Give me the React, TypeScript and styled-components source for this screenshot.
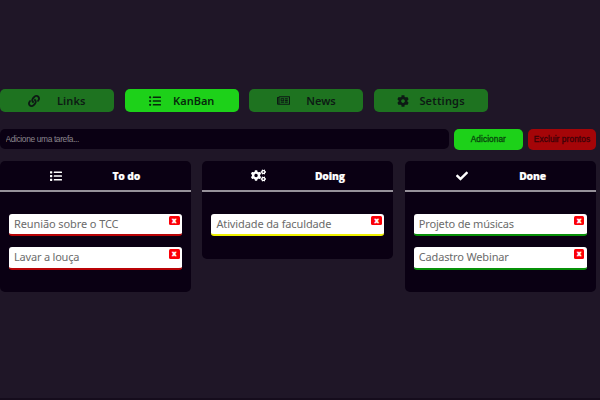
import React from 'react';
import styled, { createGlobalStyle } from 'styled-components';
import { FaLink, FaListUl, FaList, FaRegNewspaper, FaCog, FaCogs, FaCheck } from 'react-icons/fa';

const GlobalStyle = createGlobalStyle`
  * { box-sizing: border-box; }
  body { margin: 0; background: #1f1627; overflow: hidden; }
`;

const Page = styled.main`
  height: 400px;
  padding-top: 89px;
  border-bottom: 2px solid #150c1c;
  overflow: hidden;
`;

const Nav = styled.nav`
  display: flex;
  gap: 10.6px;
`;

const NavButton = styled.button<{ $active?: boolean; $inset: number }>`
  display: flex;
  align-items: center;
  width: 114px;
  height: 23px;
  padding: 0 0 0 ${p => p.$inset}px;
  border: 0;
  border-radius: 5px;
  background: ${p => (p.$active ? '#1dd119' : '#1e7320')};
  color: ${p => (p.$active ? '#062b0b' : '#0d1a14')};
  svg { flex: none; }
`;

const Label = styled.span<{ $gap: number; $spacing: number }>`
  margin-left: ${p => p.$gap}px;
  font: 600 11px/22px 'Noto Sans', sans-serif;
  letter-spacing: ${p => p.$spacing}px;
  white-space: nowrap;
`;

const Form = styled.form`
  display: flex;
  gap: 5px;
  margin-top: 17px;
`;

const TaskInput = styled.input`
  width: 449px;
  height: 20px;
  padding: 0 5.5px;
  border: 0;
  border-radius: 5px;
  background: #0a0013;
  font: 8.4px 'Liberation Sans', sans-serif;
  letter-spacing: -0.36px;
  &::placeholder { color: #8b868e; opacity: 1; }
`;

const Action = styled.button<{ $danger?: boolean }>`
  width: 68.7px;
  height: 20.6px;
  padding: 0;
  border: 0;
  border-radius: 5px;
  background: ${p => (p.$danger ? '#a50508' : '#1dd119')};
  color: ${p => (p.$danger ? '#3c0207' : '#07470c')};
  font: 400 8.3px 'Liberation Sans', sans-serif;
  -webkit-text-stroke: 0.3px currentColor;
  letter-spacing: ${p => (p.$danger ? 0.1 : 0.06)}px;
  white-space: nowrap;
`;

const Board = styled.section`
  display: flex;
  align-items: flex-start;
  gap: 11.4px;
  margin-top: 11px;
`;

const Column = styled.section`
  width: 191px;
  padding-bottom: 22.4px;
  border-radius: 5px;
  background: #0a0013;
`;

const ColumnHeader = styled.header<{ $inset: number }>`
  display: flex;
  align-items: center;
  height: 31px;
  padding: 1.2px 0 0 ${p => p.$inset}px;
  border-bottom: 2px solid #96919a;
  color: #fff;
  svg { flex: none; }
`;

const Title = styled.h2<{ $gap: number }>`
  margin: 0 0 0 ${p => p.$gap}px;
  font: 800 10.3px/20px 'Open Sans', sans-serif;
  letter-spacing: -0.15px;
  -webkit-text-stroke: 0.2px currentColor;
`;

const Tasks = styled.div`
  display: grid;
  gap: 11px;
  padding: 22.5px 9px 0;
`;

const Task = styled.article<{ $accent: string }>`
  display: flex;
  justify-content: space-between;
  height: 22.3px;
  padding: 2px 2.4px 0 5px;
  border-radius: 3px;
  border-bottom: 2px solid ${p => p.$accent};
  background: #fff;
  color: #6b6b6b;
`;

const TaskText = styled.span<{ $spacing: number }>`
  font: 400 11px/16px 'Noto Sans', sans-serif;
  letter-spacing: ${p => p.$spacing}px;
  white-space: nowrap;
`;

const Remove = styled.button`
  width: 10.6px;
  height: 9.4px;
  padding: 0;
  border: 0;
  border-radius: 1.5px;
  background: #fb0007;
  color: #fff;
  font: 800 7px/8px 'Open Sans', sans-serif;
  -webkit-text-stroke: 0.3px currentColor;
`;

const navItems = [
  { label: 'Links', icon: <FaLink size={12} />, inset: 28, gap: 17, spacing: 0.1 },
  { label: 'KanBan', icon: <FaListUl size={12} />, inset: 24, gap: 12.5, spacing: 0 },
  { label: 'News', icon: <FaRegNewspaper size={13} />, inset: 28, gap: 16, spacing: 0 },
  { label: 'Settings', icon: <FaCog size={12} />, inset: 23, gap: 10.6, spacing: 0.2 },
];

const activeLabel = 'KanBan';

const columns = [
  {
    title: 'To do', icon: <FaList size={12} />, inset: 50, gap: 50.4, accent: '#b90306',
    tasks: [{ text: 'Reunião sobre o TCC', spacing: -0.1 }, { text: 'Lavar a louça', spacing: -0.2 }],
  },
  {
    title: 'Doing', icon: <FaCogs size={15} />, inset: 49, gap: 48.5, accent: '#eef000',
    tasks: [{ text: 'Atividade da faculdade', spacing: -0.12 }],
  },
  {
    title: 'Done', icon: <FaCheck size={12} />, inset: 51, gap: 51.4, accent: '#079008',
    tasks: [{ text: 'Projeto de músicas', spacing: -0.16 }, { text: 'Cadastro Webinar', spacing: -0.16 }],
  },
];

export default function App() {
  return (
    <>
      <GlobalStyle />
      <Page>
        <Nav>
          {navItems.map(n => (
            <NavButton key={n.label} $active={n.label === activeLabel} $inset={n.inset}>
              {n.icon}
              <Label $gap={n.gap} $spacing={n.spacing}>{n.label}</Label>
            </NavButton>
          ))}
        </Nav>
        <Form>
          <TaskInput placeholder="Adicione uma tarefa..." />
          <Action type="button">Adicionar</Action>
          <Action type="button" $danger>Excluir prontos</Action>
        </Form>
        <Board>
          {columns.map(c => (
            <Column key={c.title}>
              <ColumnHeader $inset={c.inset}>
                {c.icon}
                <Title $gap={c.gap}>{c.title}</Title>
              </ColumnHeader>
              <Tasks>
                {c.tasks.map(t => (
                  <Task key={t.text} $accent={c.accent}>
                    <TaskText $spacing={t.spacing}>{t.text}</TaskText>
                    <Remove>x</Remove>
                  </Task>
                ))}
              </Tasks>
            </Column>
          ))}
        </Board>
      </Page>
    </>
  );
}
